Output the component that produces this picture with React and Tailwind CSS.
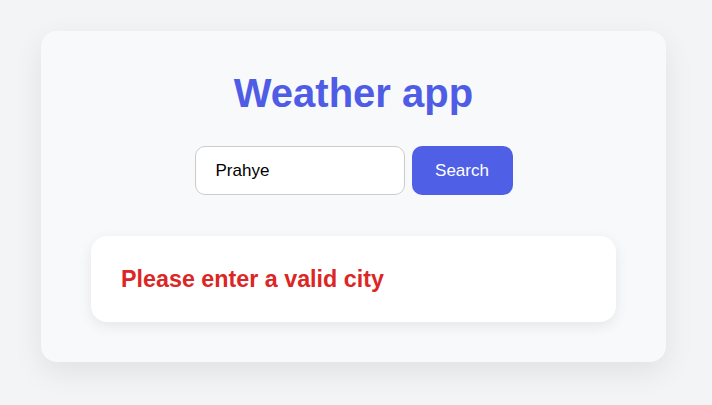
import { useState } from 'react';

export default function App() {
  const [city, setCity] = useState('Prahye');

  return (
    <div className="min-h-screen bg-[#f3f4f6] pt-[31px]" style={{ fontFamily: '"Liberation Sans", Arial, sans-serif' }}>
      <div className="ml-[41px] w-[625px] rounded-[16px] bg-[#f8f9fb] px-[50px] pt-[42px] pb-[40px] shadow-[0_10px_30px_rgba(0,0,0,0.08)]">
        <h1 className="text-center text-[40px] font-bold leading-none text-[#4f5de6]">Weather app</h1>

        <div className="mt-[33px] flex justify-center gap-[7px]">
          <input
            value={city}
            onChange={(e) => setCity(e.target.value)}
            className="h-[49px] w-[210px] rounded-[10px] border border-[#cccccc] bg-white px-5 text-[17px] text-black outline-none"
          />
          <button className="h-[49px] w-[101px] rounded-[10px] bg-[#4f5fe6] text-[17px] text-white">Search</button>
        </div>

        <div className="mt-[41px] rounded-[16px] bg-white px-[30px] pt-[32px] pb-[31px] shadow-[0_4px_14px_rgba(0,0,0,0.08)]">
          <p className="text-[23.3px] font-bold leading-none text-[#dc2626]">Please enter a valid city</p>
        </div>
      </div>
    </div>
  );
}
